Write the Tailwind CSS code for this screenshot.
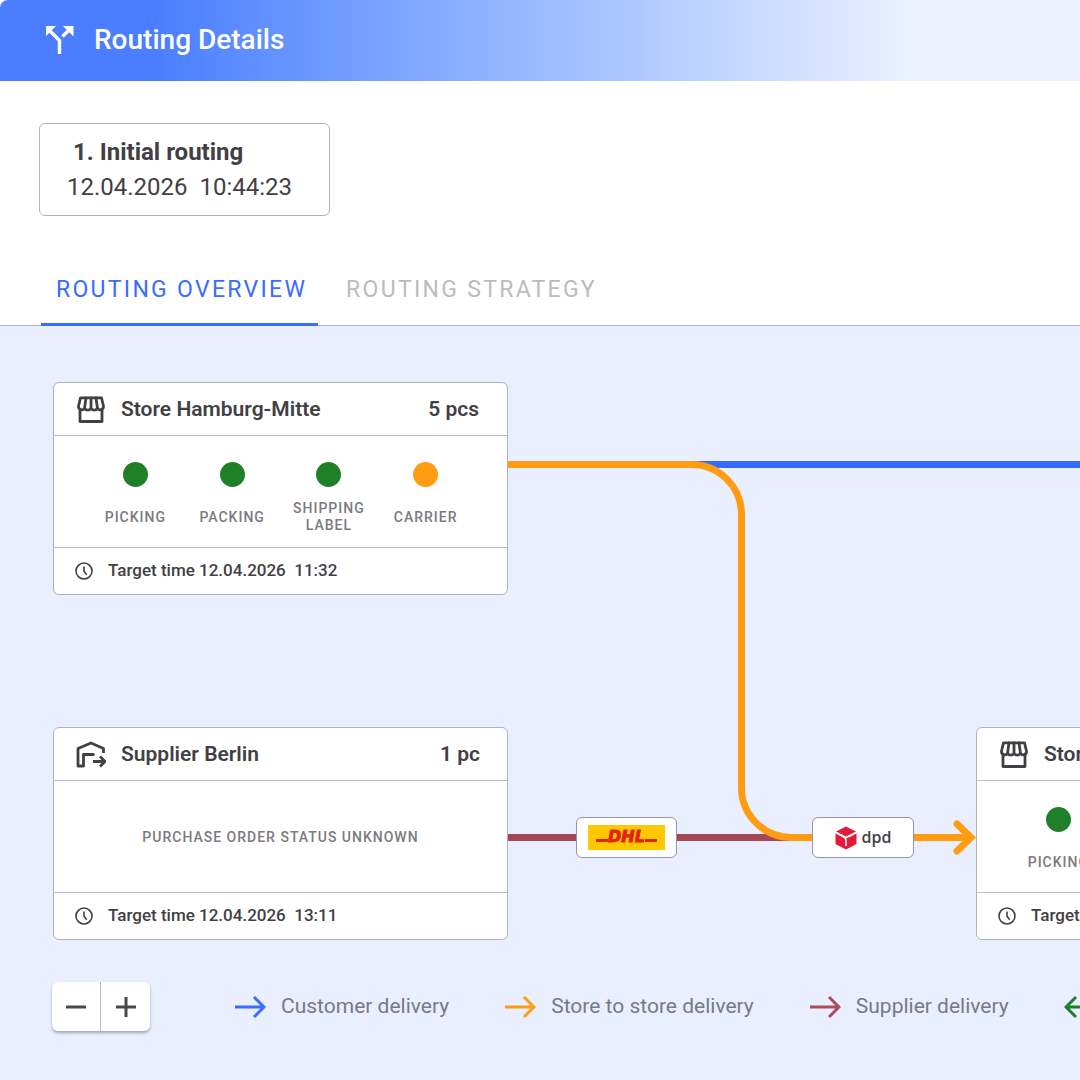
<!DOCTYPE html>
<html lang="en">
<head>
  <meta charset="UTF-8" />
  <meta name="viewport" content="width=device-width, initial-scale=1.0" />
  <title>Routing Details</title>
  <script src="https://cdn.jsdelivr.net/npm/@tailwindcss/browser@4"></script>
</head>
<body class="min-h-screen flex flex-col bg-white font-['Roboto',sans-serif] text-[#424045] overflow-x-hidden">

  <!-- Shared icons -->
  <svg class="hidden" aria-hidden="true">
    <symbol id="icon-store" viewBox="0 0 30 30">
      <g fill="none" stroke="currentColor" stroke-width="2.800" stroke-linejoin="round" stroke-linecap="round">
        <path d="M4 15v11.500h22V15" />
        <path d="M4.500 2.800h21l2 8.400a3.300 3.300 0 0 1-6.100 2 3.600 3.600 0 0 1-6.400 0 3.600 3.600 0 0 1-6.400 0 3.300 3.300 0 0 1-6.100-2z" />
        <path d="M10 3l-1.300 9M15 3v9M20 3l1.300 9" />
      </g>
    </symbol>
    <symbol id="icon-supplier" viewBox="0 0 30 30">
      <g fill="none" stroke="currentColor" stroke-width="2.800" stroke-linejoin="round">
        <path d="M27.500 13V8.500L15 3 2 8.500v17.500h5.500V14.500h11" />
        <path d="M17 21.500h11.500M24 16.500l5 5-5 5" />
      </g>
    </symbol>
    <symbol id="icon-clock" viewBox="0 0 18 18">
      <g fill="none" stroke="currentColor" stroke-width="1.600">
        <circle cx="9" cy="9" r="8" />
        <path d="M9 4.500v4.700l2.700 3.600" />
      </g>
    </symbol>
    <symbol id="icon-arrow" viewBox="0 0 32 24">
      <path d="M1 12h29M20 2l10 10-10 10" fill="none" stroke="currentColor" stroke-width="3" />
    </symbol>
  </svg>

  <header class="flex items-center gap-5 h-[81px] px-[45px] pb-0.5 rounded-tl-lg bg-linear-to-r from-[#4a7dff] from-14% to-[#eaf0ff] to-84% text-white">
    <svg class="w-[29px] h-[28px]" viewBox="0 0 29 28" fill="none" stroke="currentColor" stroke-width="3.400" aria-hidden="true">
      <path d="M14.500 28V14.500L4 4M17.500 10.500L25 3" />
      <path d="M1 10V0h10zM18 0h10.500v10.500z" fill="currentColor" stroke="none" />
    </svg>
    <h1 class="text-[28px] font-medium">Routing Details</h1>
  </header>

  <section class="px-[39px] pt-[42px]">
    <button class="block w-[291px] h-[93px] px-[27px] border border-[#b4b3b7] rounded-md text-left text-[24px] leading-[35px]">
      <span class="block pl-1.5 font-bold">1. Initial routing</span>
      <span class="block whitespace-pre">12.04.2026  10:44:23</span>
    </button>
  </section>

  <nav class="flex gap-[13px] mt-9 px-[41px] border-b border-[#b4b4ba]" role="tablist">
    <button role="tab" aria-selected="true" class="h-[74px] pt-1.5 pl-[15px] pr-[11px] -mb-px border-b-3 border-[#3a6cff] text-[23px] tracking-widest text-[#3a6cff]">ROUTING OVERVIEW</button>
    <button role="tab" aria-selected="false" class="h-[74px] pt-1.5 pl-[15px] pr-[11px] -mb-px border-b-3 border-transparent text-[23px] tracking-widest text-[#bbbbbd]">ROUTING STRATEGY</button>
  </nav>

  <main class="relative flex-1 flex flex-col justify-end min-h-[754px] bg-[#e9effe] overflow-hidden">

    <!-- Connections between the nodes -->
    <svg class="absolute left-0 top-0 w-[1080px] h-[640px]" viewBox="0 0 1080 640" fill="none" stroke-width="7" aria-hidden="true">
      <path d="M690 138.500H1080" stroke="#366aff" />
      <path d="M508 511.500H812" stroke="#a64659" />
      <path d="M508 138.500H691.500A50 50 0 0 1 741.500 188.500V461.500A50 50 0 0 0 791.500 511.500H972" stroke="#ff9c12" />
      <path d="M957 498l14 13.500-14 13.500" stroke="#ff9c12" stroke-linecap="round" />
    </svg>

    <!-- Store Hamburg-Mitte -->
    <article class="absolute left-[53px] top-[56px] w-[455px] bg-white border border-[#b0b1ba] rounded-md">
      <div class="flex items-center h-[53px] pt-px pl-[22px] pr-7 border-b border-[#bfbfc4] text-[21px] font-semibold">
        <svg class="w-[30px] h-[30px] mr-[15px]" aria-hidden="true"><use href="#icon-store" /></svg>
        <h2>Store Hamburg-Mitte</h2>
        <span class="ml-auto">5 pcs</span>
      </div>
      <ul class="grid grid-cols-4 h-[112px] px-[33px] pt-[26px] border-b border-[#bfbfc4] text-[14px] leading-[17px] font-medium tracking-[1px] text-[#7b7a7f] text-center">
        <li class="flex flex-col items-center gap-[13px]"><span class="size-[25px] rounded-full bg-[#1f8029]"></span><span class="flex items-center h-[34px]">PICKING</span></li>
        <li class="flex flex-col items-center gap-[13px]"><span class="size-[25px] rounded-full bg-[#1f8029]"></span><span class="flex items-center h-[34px]">PACKING</span></li>
        <li class="flex flex-col items-center gap-[13px]"><span class="size-[25px] rounded-full bg-[#1f8029]"></span><span class="flex items-center h-[34px]">SHIPPING LABEL</span></li>
        <li class="flex flex-col items-center gap-[13px]"><span class="size-[25px] rounded-full bg-[#ff9c12]"></span><span class="flex items-center h-[34px]">CARRIER</span></li>
      </ul>
      <p class="flex items-center gap-[15px] h-[46px] px-[21px] text-[17px] font-medium whitespace-pre"><svg class="w-[18px] h-[18px]" aria-hidden="true"><use href="#icon-clock" /></svg>Target time 12.04.2026  11:32</p>
    </article>

    <!-- Supplier Berlin -->
    <article class="absolute left-[53px] top-[401px] w-[455px] bg-white border border-[#b0b1ba] rounded-md">
      <div class="flex items-center h-[53px] pt-px pl-[22px] pr-[27px] border-b border-[#bfbfc4] text-[21px] font-semibold">
        <svg class="w-[30px] h-[30px] mr-[15px]" aria-hidden="true"><use href="#icon-supplier" /></svg>
        <h2>Supplier Berlin</h2>
        <span class="ml-auto">1 pc</span>
      </div>
      <p class="flex items-center justify-center h-[112px] pt-0.5 border-b border-[#bfbfc4] text-[14px] font-medium tracking-[1px] text-[#7b7a7f]">PURCHASE ORDER STATUS UNKNOWN</p>
      <p class="flex items-center gap-[15px] h-[46px] px-[21px] text-[17px] font-medium whitespace-pre"><svg class="w-[18px] h-[18px]" aria-hidden="true"><use href="#icon-clock" /></svg>Target time 12.04.2026  13:11</p>
    </article>

    <!-- Receiving store -->
    <article class="absolute left-[976px] top-[401px] w-[455px] bg-white border border-[#b0b1ba] rounded-md">
      <div class="flex items-center h-[53px] pt-px pl-[22px] pr-7 border-b border-[#bfbfc4] text-[21px] font-semibold">
        <svg class="w-[30px] h-[30px] mr-[15px]" aria-hidden="true"><use href="#icon-store" /></svg>
        <h2>Store Berlin</h2>
      </div>
      <ul class="grid grid-cols-4 h-[112px] px-[33px] pt-[26px] border-b border-[#bfbfc4] text-[14px] leading-[17px] font-medium tracking-[1px] text-[#7b7a7f] text-center">
        <li class="flex flex-col items-center gap-[13px]"><span class="size-[25px] rounded-full bg-[#1f8029]"></span><span class="flex items-center h-[34px]">PICKING</span></li>
      </ul>
      <p class="flex items-center gap-[15px] h-[46px] px-[21px] text-[17px] font-medium whitespace-pre"><svg class="w-[18px] h-[18px]" aria-hidden="true"><use href="#icon-clock" /></svg>Target time</p>
    </article>

    <!-- Carriers -->
    <div class="absolute left-[576px] top-[491px] flex items-center justify-center w-[101px] h-[41px] bg-white border border-[#9496a8] rounded-md">
      <div class="flex items-center justify-center w-[77px] h-[25px] bg-[#ffc800] text-[#e3220f]">
        <span class="w-3 h-[3px] mt-1.5 bg-[#e3220f]"></span>
        <span class="pb-0.5 text-[16px] leading-none font-bold italic font-['DejaVu_Sans',sans-serif] [-webkit-text-stroke:1px_#e3220f]">DHL</span>
        <span class="w-3 h-[3px] mt-1.5 bg-[#e3220f]"></span>
      </div>
    </div>
    <div class="absolute left-[812px] top-[491px] flex items-center justify-center gap-[5px] w-[102px] h-[41px] bg-white border border-[#9496a8] rounded-md">
      <svg class="w-[22px] h-[24px]" viewBox="0 0 22 24" aria-hidden="true">
        <path d="M11 .500L21 5.500 11 10.500 1 5.500zM.500 7L11 12.500v11L.500 18zM21.500 7L11 12.500v11L21.500 18z" fill="#e4183b" />
        <path d="M.500 6.500l8 4.300q2.500 1.200 2.500 3.700V20M21.500 6.500L13.500 10.800" fill="none" stroke="#fff" stroke-width="1.500" />
      </svg>
      <span class="pb-0.5 text-[16px] leading-5 font-semibold font-['Open_Sans',sans-serif]">dpd</span>
    </div>

    <!-- Zoom and legend -->
    <footer class="flex items-center pl-[52px] pb-[49px] text-[21px] text-[#777a86] whitespace-nowrap">
      <div class="flex shrink-0 h-[49px] mr-[84px] bg-white rounded-md shadow-[0_2px_3px_rgba(60,60,80,0.4)] text-[#49474b]">
        <button aria-label="Zoom out" class="flex items-center justify-center w-[49px] border-r border-[#bdbdc4]">
          <svg class="size-[22px]" viewBox="0 0 22 22" stroke="currentColor" stroke-width="3"><path d="M1 11h20" /></svg>
        </button>
        <button aria-label="Zoom in" class="flex items-center justify-center w-[49px]">
          <svg class="size-[22px]" viewBox="0 0 22 22" stroke="currentColor" stroke-width="3"><path d="M1 11h20M11 1v20" /></svg>
        </button>
      </div>
      <ul class="flex shrink-0 gap-[55px]">
        <li class="flex items-center gap-[15px]"><svg class="w-8 h-6 text-[#3a6cff]" aria-hidden="true"><use href="#icon-arrow" /></svg>Customer delivery</li>
        <li class="flex items-center gap-[15px]"><svg class="w-8 h-6 text-[#ff9c12]" aria-hidden="true"><use href="#icon-arrow" /></svg>Store to store delivery</li>
        <li class="flex items-center gap-[15px]"><svg class="w-8 h-6 text-[#ad4c5c]" aria-hidden="true"><use href="#icon-arrow" /></svg>Supplier delivery</li>
        <li class="flex items-center gap-[15px]"><svg class="w-8 h-6 text-[#1f8029] rotate-180" aria-hidden="true"><use href="#icon-arrow" /></svg>Return</li>
      </ul>
    </footer>
  </main>
</body>
</html>
